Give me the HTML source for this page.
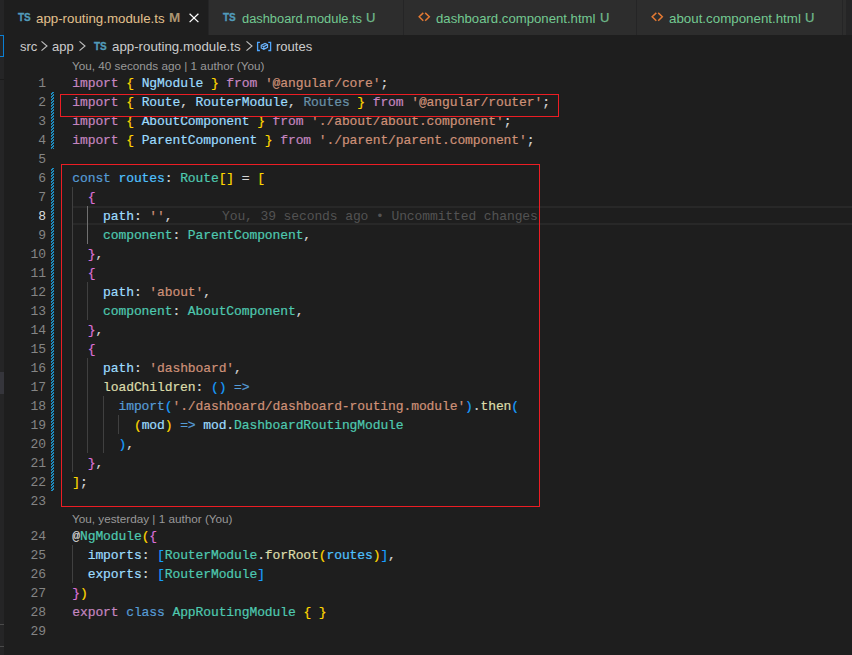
<!DOCTYPE html><html><head><meta charset="utf-8"><style>
*{margin:0;padding:0;box-sizing:border-box}
html,body{width:852px;height:655px;overflow:hidden;background:#1e1e1e}
body{position:relative;font-family:"Liberation Sans",sans-serif}
.abs{position:absolute}
#strip{position:absolute;left:0;top:0;width:4px;height:655px;background:#252526}
#tabs{position:absolute;left:4px;top:0;width:848px;height:35px;background:#252526}
.tab{position:absolute;top:0;height:35px;background:#2d2d2d;border-right:1px solid #252526}
.tab.active{background:#1e1e1e}
.tt{position:absolute;top:10px;font-size:13px;line-height:17px;white-space:nowrap}
.ts{position:absolute;font:bold 10px "Liberation Sans",sans-serif;color:#519aba;-webkit-text-stroke:0.3px #519aba;letter-spacing:0px}
#crumbs{position:absolute;left:4px;top:35px;width:848px;height:22px;color:#a9a9a9;font-size:13px}
.ln{position:absolute;left:72.3px;-webkit-text-stroke:0.2px currentColor;height:19px;line-height:19px;font-family:"Liberation Mono",monospace;font-size:13px;letter-spacing:-0.1px;white-space:pre;color:#D4D4D4}
.num{position:absolute;left:20px;width:26px;text-align:right;height:19px;line-height:19px;font-family:"Liberation Mono",monospace;font-size:13px;letter-spacing:-0.1px;color:#858585}
.num.act{color:#dcdcdc}
.kw{color:#C586C0} .b1{color:#FFD700} .b2{color:#DA70D6} .b3{color:#179FFF} .v{color:#9CDCFE} .s{color:#CE9178} .t{color:#4EC9B0} .bl{color:#569CD6} .c{color:#4FC1FF} .f{color:#DCDCAA} .p{color:#D4D4D4} .dim{color:#9CDCFE;opacity:.6}
.g{position:absolute;width:1px;background:#404040}
.ga{background:#707070}
.gut{position:absolute;left:51px;width:3px;background-image:linear-gradient(-45deg,#1d8cc0 25%,transparent 25%,transparent 50%,#1d8cc0 50%,#1d8cc0 75%,transparent 75%,transparent);background-size:3px 3px}
.lens{position:absolute;left:72px;font-size:11.73px;color:#999999;white-space:nowrap;height:16px;line-height:16px}
#curline{position:absolute;left:73px;top:206px;width:779px;height:19px;border-top:2px solid #282828;border-bottom:2px solid #282828}
#blame{position:absolute;left:222px;top:207px;height:19px;line-height:19px;font-family:"Liberation Mono",monospace;font-size:13px;letter-spacing:-0.1px;white-space:pre;color:#535353}
.rb{position:absolute;border:1.5px solid #ec1d24}
</style></head><body>
<div id="tabs"></div>
<div class="tab active" style="left:4px;width:205px"></div>
<div class="tab" style="left:209px;width:195px"></div>
<div class="tab" style="left:404px;width:233px"></div>
<div class="tab" style="left:637px;width:206px"></div>
<div class="abs" style="left:843px;top:0;width:3px;height:35px;background:#2d2d2d"></div>
<span class="ts" style="left:18px;top:12px">TS</span>
<span class="tt" style="left:36px;color:#e2c08d;font-size:13.3px">app-routing.module.ts</span>
<span class="tt" style="left:169px;top:9px;color:#ad9671;font-weight:bold;font-size:13.5px">M</span>
<svg class="abs" style="left:184px;top:8px" width="20" height="20"><path d="M5.6 5.7 L14.4 14.1 M14.4 5.7 L5.6 14.1" stroke="#fff" stroke-width="1.25" fill="none"/></svg>
<span class="ts" style="left:223px;top:12px">TS</span>
<span class="tt" style="left:242px;color:#73c991;font-size:12.85px">dashboard.module.ts</span>
<span class="tt" style="left:366px;color:#6fb98a;top:9px;-webkit-text-stroke:0.25px #6fb98a">U</span>
<svg class="abs" style="left:417px;top:11px" width="14" height="12"><path d="M6.3 1.9 L2.2 5.8 L6.3 9.7 M8.2 1.9 L12.3 5.8 L8.2 9.7" stroke="#e37933" stroke-width="1.5" fill="none"/></svg>
<span class="tt" style="left:436px;color:#73c991;font-size:13.17px">dashboard.component.html</span>
<span class="tt" style="left:600px;color:#6fb98a;top:9px;-webkit-text-stroke:0.25px #6fb98a">U</span>
<svg class="abs" style="left:650px;top:11px" width="14" height="12"><path d="M6.3 1.9 L2.2 5.8 L6.3 9.7 M8.2 1.9 L12.3 5.8 L8.2 9.7" stroke="#e37933" stroke-width="1.5" fill="none"/></svg>
<span class="tt" style="left:669px;color:#73c991;font-size:13.33px">about.component.html</span>
<span class="tt" style="left:805px;color:#6fb98a;top:9px;-webkit-text-stroke:0.25px #6fb98a">U</span>
<div id="strip"></div>
<div class="abs" style="left:0;top:79px;width:4px;height:1px;background:#1b1b1b"></div>
<div class="abs" style="left:0;top:372px;width:4px;height:22px;background:#35353b"></div>
<div class="abs" style="left:0;top:624px;width:4px;height:1px;background:#4a4a4a"></div>
<div class="abs" style="left:0;top:646px;width:4px;height:1px;background:#4a4a4a"></div>
<div class="abs" style="left:-10px;top:35px;width:14px;height:22px;border:1.5px solid #0a7fd4"></div>
<span class="tt" style="left:20px;top:38px;color:#cccccc">src</span>
<svg class="abs" style="left:36px;top:38px" width="16" height="18"><path d="M5.5 3.3 L11 8 L5.5 12.6" stroke="#c0c0c0" stroke-width="1.1" fill="none"/></svg>
<span class="tt" style="left:52px;top:38px;color:#cccccc">app</span>
<svg class="abs" style="left:74px;top:38px" width="16" height="18"><path d="M5.5 3.3 L11 8 L5.5 12.6" stroke="#c0c0c0" stroke-width="1.1" fill="none"/></svg>
<span class="ts" style="left:94px;top:41px">TS</span>
<span class="tt" style="left:112px;top:38px;color:#cccccc;font-size:13.3px">app-routing.module.ts</span>
<svg class="abs" style="left:241px;top:38px" width="16" height="18"><path d="M5.5 3.3 L11 8 L5.5 12.6" stroke="#c0c0c0" stroke-width="1.1" fill="none"/></svg>
<svg class="abs" style="left:256px;top:41px" width="17" height="11"><path d="M3.9 1.4 H1.6 V9.5 H3.9 M12.3 1.4 H14.6 V9.5 H12.3" stroke="#4ea6ff" stroke-width="1.3" fill="none"/><path d="M5.2 4.3 L9 2.4 L11.6 3.6 L11.6 6.3 L7.8 8.3 L5.2 7 Z M5.2 4.3 L7.8 5.6 L11.6 3.6 M7.8 5.6 V8.3" stroke="#6bb5ff" stroke-width="1.1" fill="none"/></svg>
<span class="tt" style="left:276px;top:38px;color:#cccccc">routes</span>
<div id="curline"></div>
<div class="lens" style="top:58px">You, 40 seconds ago | 1 author (You)</div>
<div class="lens" style="top:511px">You, yesterday | 1 author (You)</div>
<div class="num" style="top:74px">1</div><div class="num" style="top:93px">2</div><div class="num" style="top:112px">3</div><div class="num" style="top:131px">4</div><div class="num" style="top:150px">5</div><div class="num" style="top:169px">6</div><div class="num" style="top:188px">7</div><div class="num act" style="top:207px">8</div><div class="num" style="top:226px">9</div><div class="num" style="top:245px">10</div><div class="num" style="top:264px">11</div><div class="num" style="top:283px">12</div><div class="num" style="top:302px">13</div><div class="num" style="top:321px">14</div><div class="num" style="top:340px">15</div><div class="num" style="top:359px">16</div><div class="num" style="top:378px">17</div><div class="num" style="top:397px">18</div><div class="num" style="top:416px">19</div><div class="num" style="top:435px">20</div><div class="num" style="top:454px">21</div><div class="num" style="top:473px">22</div><div class="num" style="top:492px">23</div><div class="num" style="top:527px">24</div><div class="num" style="top:546px">25</div><div class="num" style="top:565px">26</div><div class="num" style="top:584px">27</div><div class="num" style="top:603px">28</div><div class="num" style="top:622px">29</div>
<div class="gut" style="top:92px;height:57px"></div>
<div class="gut" style="top:168px;height:323px"></div>
<div class="g" style="left:72.0px;top:187px;height:285px"></div><div class="g ga" style="left:87.0px;top:206px;height:38px"></div><div class="g" style="left:87.0px;top:282px;height:38px"></div><div class="g" style="left:87.0px;top:358px;height:95px"></div><div class="g" style="left:103.0px;top:396px;height:57px"></div><div class="g" style="left:118.0px;top:415px;height:19px"></div><div class="g" style="left:72.0px;top:545px;height:38px"></div>
<div class="ln" style="top:74px"><span class="kw">import</span><span class="p"> </span><span class="b1">{</span><span class="p"> </span><span class="v">NgModule</span><span class="p"> </span><span class="b1">}</span><span class="p"> </span><span class="kw">from</span><span class="p"> </span><span class="s">&#x27;@angular/core&#x27;</span><span class="p">;</span></div><div class="ln" style="top:93px"><span class="kw">import</span><span class="p"> </span><span class="b1">{</span><span class="p"> </span><span class="v">Route</span><span class="p">, </span><span class="v">RouterModule</span><span class="p">, </span><span class="dim">Routes</span><span class="p"> </span><span class="b1">}</span><span class="p"> </span><span class="kw">from</span><span class="p"> </span><span class="s">&#x27;@angular/router&#x27;</span><span class="p">;</span></div><div class="ln" style="top:112px"><span class="kw">import</span><span class="p"> </span><span class="b1">{</span><span class="p"> </span><span class="v">AboutComponent</span><span class="p"> </span><span class="b1">}</span><span class="p"> </span><span class="kw">from</span><span class="p"> </span><span class="s">&#x27;./about/about.component&#x27;</span><span class="p">;</span></div><div class="ln" style="top:131px"><span class="kw">import</span><span class="p"> </span><span class="b1">{</span><span class="p"> </span><span class="v">ParentComponent</span><span class="p"> </span><span class="b1">}</span><span class="p"> </span><span class="kw">from</span><span class="p"> </span><span class="s">&#x27;./parent/parent.component&#x27;</span><span class="p">;</span></div><div class="ln" style="top:150px"></div><div class="ln" style="top:169px"><span class="bl">const</span><span class="p"> </span><span class="c">routes</span><span class="p">: </span><span class="t">Route</span><span class="b1">[]</span><span class="p"> = </span><span class="b1">[</span></div><div class="ln" style="top:188px"><span class="p">  </span><span class="b2">{</span></div><div class="ln" style="top:207px"><span class="p">    </span><span class="v">path</span><span class="p">: </span><span class="s">&#x27;&#x27;</span><span class="p">,</span></div><div class="ln" style="top:226px"><span class="p">    </span><span class="t">component</span><span class="p">: </span><span class="t">ParentComponent</span><span class="p">,</span></div><div class="ln" style="top:245px"><span class="p">  </span><span class="b2">}</span><span class="p">,</span></div><div class="ln" style="top:264px"><span class="p">  </span><span class="b2">{</span></div><div class="ln" style="top:283px"><span class="p">    </span><span class="v">path</span><span class="p">: </span><span class="s">&#x27;about&#x27;</span><span class="p">,</span></div><div class="ln" style="top:302px"><span class="p">    </span><span class="t">component</span><span class="p">: </span><span class="t">AboutComponent</span><span class="p">,</span></div><div class="ln" style="top:321px"><span class="p">  </span><span class="b2">}</span><span class="p">,</span></div><div class="ln" style="top:340px"><span class="p">  </span><span class="b2">{</span></div><div class="ln" style="top:359px"><span class="p">    </span><span class="v">path</span><span class="p">: </span><span class="s">&#x27;dashboard&#x27;</span><span class="p">,</span></div><div class="ln" style="top:378px"><span class="p">    </span><span class="f">loadChildren</span><span class="p">: </span><span class="b3">()</span><span class="p"> </span><span class="bl">=&gt;</span></div><div class="ln" style="top:397px"><span class="p">      </span><span class="bl">import</span><span class="b3">(</span><span class="s">&#x27;./dashboard/dashboard-routing.module&#x27;</span><span class="b3">)</span><span class="p">.</span><span class="f">then</span><span class="b3">(</span></div><div class="ln" style="top:416px"><span class="p">        </span><span class="b1">(</span><span class="v">mod</span><span class="b1">)</span><span class="p"> </span><span class="bl">=&gt;</span><span class="p"> </span><span class="v">mod</span><span class="p">.</span><span class="t">DashboardRoutingModule</span></div><div class="ln" style="top:435px"><span class="p">      </span><span class="b3">)</span><span class="p">,</span></div><div class="ln" style="top:454px"><span class="p">  </span><span class="b2">}</span><span class="p">,</span></div><div class="ln" style="top:473px"><span class="b1">]</span><span class="p">;</span></div><div class="ln" style="top:492px"></div><div class="ln" style="top:527px"><span class="p">@</span><span class="t">NgModule</span><span class="b1">(</span><span class="b2">{</span></div><div class="ln" style="top:546px"><span class="p">  </span><span class="v">imports</span><span class="p">: </span><span class="b3">[</span><span class="t">RouterModule</span><span class="p">.</span><span class="f">forRoot</span><span class="b1">(</span><span class="c">routes</span><span class="b1">)</span><span class="b3">]</span><span class="p">,</span></div><div class="ln" style="top:565px"><span class="p">  </span><span class="v">exports</span><span class="p">: </span><span class="b3">[</span><span class="t">RouterModule</span><span class="b3">]</span></div><div class="ln" style="top:584px"><span class="b2">}</span><span class="b1">)</span></div><div class="ln" style="top:603px"><span class="kw">export</span><span class="p"> </span><span class="bl">class</span><span class="p"> </span><span class="t">AppRoutingModule</span><span class="p"> </span><span class="b1">{ }</span></div><div class="ln" style="top:622px"></div>
<div id="blame">You, 39 seconds ago • Uncommitted changes</div>
<div class="rb" style="left:60px;top:94px;width:499px;height:23px"></div>
<div class="rb" style="left:61px;top:164px;width:479px;height:343px"></div>
</body></html>
